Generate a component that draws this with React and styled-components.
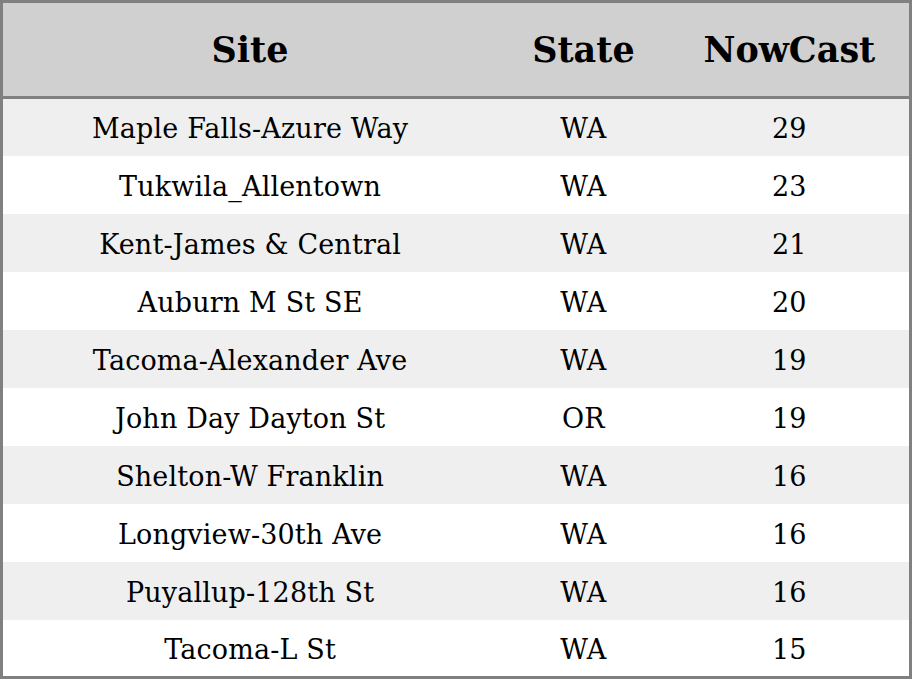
import React from "react";
import styled, { createGlobalStyle } from "styled-components";

const Global = createGlobalStyle`
  html, body { margin: 0; padding: 0; background: #ffffff; }
  body { font-family: "DejaVu Serif", serif; color: #000; }
`;

const Table = styled.table`
  width: 912px;
  border-collapse: collapse;
  border: 3px solid #808080;
  table-layout: fixed;
  font-family: "DejaVu Serif", serif;
`;

const HeadCell = styled.th`
  box-sizing: border-box;
  background: #d0d0d0;
  height: 96px;
  padding: 0;
  font-size: 35px;
  font-weight: bold;
  text-align: center;
  border-bottom: 3px solid #808080;
  width: ${(p) => p.$w}px;
`;

const Row = styled.tr`
  background: ${(p) => (p.$odd ? "#efefef" : "#ffffff")};
`;

const Cell = styled.td`
  box-sizing: border-box;
  height: 58px;
  padding: 3px 0 0;
  font-size: 27px;
  text-align: center;
  letter-spacing: 0.15px;
`;

const rows = [
  ["Maple Falls-Azure Way", "WA", 29],
  ["Tukwila_Allentown", "WA", 23],
  ["Kent-James & Central", "WA", 21],
  ["Auburn M St SE", "WA", 20],
  ["Tacoma-Alexander Ave", "WA", 19],
  ["John Day Dayton St", "OR", 19],
  ["Shelton-W Franklin", "WA", 16],
  ["Longview-30th Ave", "WA", 16],
  ["Puyallup-128th St", "WA", 16],
  ["Tacoma-L St", "WA", 15],
];

export default function App() {
  return (
    <>
      <Global />
      <Table>
        <thead>
          <tr>
            <HeadCell $w={494}>Site</HeadCell>
            <HeadCell $w={172}>State</HeadCell>
            <HeadCell $w={240}>NowCast</HeadCell>
          </tr>
        </thead>
        <tbody>
          {rows.map(([site, st, v], i) => (
            <Row key={i} $odd={i % 2 === 0}>
              <Cell>{site}</Cell>
              <Cell>{st}</Cell>
              <Cell>{v}</Cell>
            </Row>
          ))}
        </tbody>
      </Table>
    </>
  );
}
